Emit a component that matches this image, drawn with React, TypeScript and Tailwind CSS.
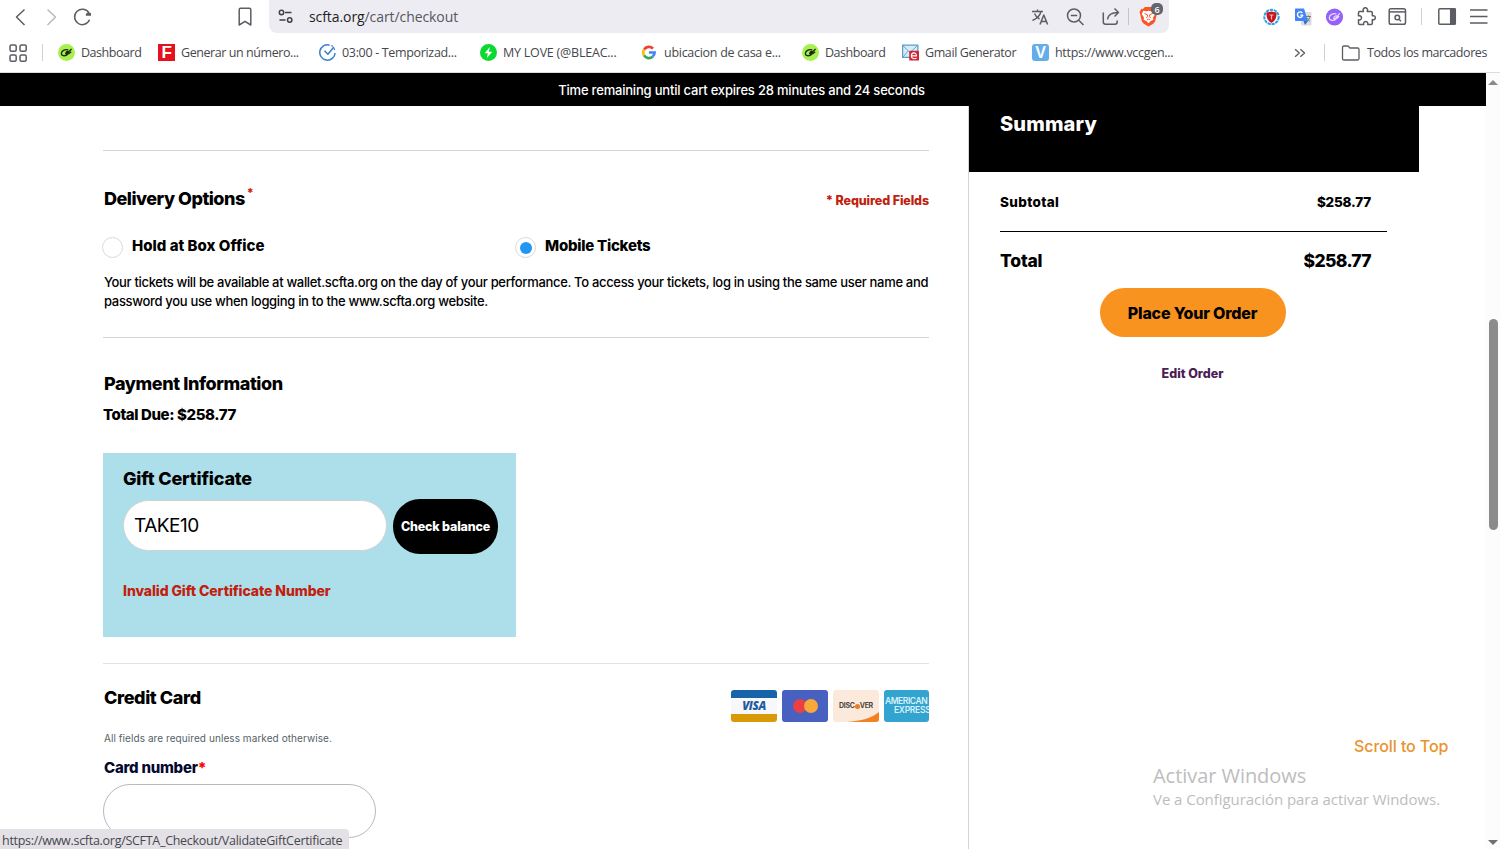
import type {ReactNode} from 'react';

const Svg = ({children, size = 20}: {children: ReactNode; size?: number}) => (
  <svg
    width={size}
    height={size}
    viewBox="0 0 20 20"
    fill="none"
    stroke="#5b5d63"
    strokeWidth="1.5"
    strokeLinejoin="round"
    className="block shrink-0"
  >
    {children}
  </svg>
);

const LeafIcon = () => (
  <Svg size={17}>
    <circle cx="10" cy="10" r="10" fill="#a6f04f" stroke="none" />
    <path
      d="M12 7C8 5.500 3.800 8.500 4 11.500C4.300 14.500 9 14.500 11.500 12C13.500 10 12.500 8 10.500 9C9 10 8.500 12 10 11.500L16 6M12.500 11.500L15.500 9"
      stroke="#1d2b12"
      strokeWidth="1.600"
    />
  </Svg>
);

const FIcon = () => (
  <span className="flex size-[17px] shrink-0 items-center justify-center bg-[#e3121c] font-['Liberation_Sans'] text-[17px] leading-none font-bold text-white">
    F
  </span>
);

const TimerIcon = () => (
  <Svg size={17}>
    <path d="M12.500 1.400A9 9 0 1 0 18.900 10.500" stroke="#3b7fd0" strokeWidth="1.800" />
    <path d="M6.500 8l4 4L17.500 3.500" stroke="#3b7fd0" strokeWidth="1.800" />
    <path d="M14.500 1.800l1.800 1M17.500 5l1 2" stroke="#3b7fd0" />
  </Svg>
);

const BoltIcon = () => (
  <Svg size={17}>
    <circle cx="10" cy="10" r="10" fill="#0bd92f" stroke="none" />
    <path d="M11.500 3.500L5.500 11h3.700l-1 5.500L14.500 9h-4z" fill="#fff" stroke="none" />
  </Svg>
);

const GoogleIcon = () => (
  <Svg size={17}>
    <g strokeWidth="3.200" strokeLinejoin="miter">
      <path d="M3.600 6.600A6.600 6.600 0 0 1 14.100 5.400" stroke="#ea4335" />
      <path d="M3.600 13.400A6.700 6.700 0 0 1 3.600 6.600" stroke="#fbbc05" />
      <path d="M13.600 15A6.600 6.600 0 0 1 3.600 13.400" stroke="#34a853" />
      <path d="M9.300 10h6.700A6.600 6.600 0 0 1 13.600 15" stroke="#4285f4" />
    </g>
  </Svg>
);

const MailIcon = () => (
  <Svg size={17}>
    <rect x="0.700" y="1.200" width="18" height="14.500" fill="#d6ecf9" stroke="#5d9dcb" />
    <path d="M1 2l8.500 8L18 2M1 15.500L7 8.500" stroke="#5d9dcb" strokeWidth="1.100" />
    <rect x="8.500" y="8" width="11.500" height="11.500" rx="1" fill="#cf2732" stroke="none" />
    <path d="M11.500 14h5.500c0-5-6-4.500-6 0 0 3.500 4 4 6 2.500" stroke="#fff" strokeWidth="1.300" />
  </Svg>
);

const VIcon = () => (
  <span className="flex size-[17px] shrink-0 items-center justify-center rounded-[3px] bg-[#62aeea] font-['Liberation_Sans'] text-[16px] leading-none font-bold text-white">
    V
  </span>
);

const bookmarks = [
  {icon: <LeafIcon />, label: 'Dashboard', width: 'w-[100px] tracking-[-0.450px]'},
  {icon: <FIcon />, label: 'Generar un número...', width: 'w-[161px] tracking-[-0.430px]'},
  {icon: <TimerIcon />, label: '03:00 - Temporizad...', width: 'w-[161px] tracking-[-0.330px]'},
  {icon: <BoltIcon />, label: 'MY LOVE (@BLEAC...', width: 'w-[161px] tracking-[-0.220px]'},
  {icon: <GoogleIcon />, label: 'ubicacion de casa e...', width: 'w-[161px] tracking-[-0.280px]'},
  {icon: <LeafIcon />, label: 'Dashboard', width: 'w-[100px] tracking-[-0.450px]'},
  {icon: <MailIcon />, label: 'Gmail Generator', width: 'w-[130px] tracking-[-0.400px]'},
  {icon: <VIcon />, label: 'https://www.vccgen...', width: 'w-[161px] tracking-[-0.300px]'},
];

const Toolbar = () => (
  <div className="flex h-[33px] items-center">
    <div className="ml-[10px] flex items-center gap-[11px]">
      <Svg>
        <path d="M14.500 2.500L6.500 10l8 8" />
      </Svg>
      <Svg>
        <path d="M6.500 2.500l8 7.500-8 8" stroke="#b9b9bd" />
      </Svg>
      <Svg>
        <path d="M17.500 12.800A7.700 7.700 0 1 1 17 6" strokeWidth="1.500" />
        <path d="M19 3.500v5.200h-5.200c-.3-2.500 2.200-4 5.200-2.500z" fill="#5b5d63" stroke="none" />
      </Svg>
    </div>
    <div className="ml-[143px]">
      <Svg>
        <path d="M4.200 2.800c0-1 .6-1.500 1.400-1.500h8.800c.8 0 1.400.5 1.400 1.500V18L10 14.300 4.200 18z" />
      </Svg>
    </div>
    <div className="ml-[14px] flex h-[33px] w-[900px] items-center rounded-b-lg bg-[#edecf2] pl-[7px]">
      <Svg>
        <g stroke="#3f4046">
          <circle cx="5.500" cy="5.500" r="2.200" />
          <path d="M9 5.500h6.500M3.500 13h6" />
          <circle cx="13.700" cy="13" r="2.200" />
        </g>
      </Svg>
      <span className="ml-[13px] text-[14px] tracking-[-0.080px] text-[#55575e]">
        <span className="text-[#1e1f24]">scfta.org</span>/cart/checkout
      </span>
      <div className="mr-[10px] ml-auto flex items-center">
        <Svg>
          <path d="M2 4.500h11M7.500 2.500v2M11 4.500C10 8.500 6 12 2.500 13.500M4.500 6.500c1 2.500 3 4.500 5 5.500" strokeWidth="1.400" />
          <path d="M10 17.500l3.800-9.500 3.800 9.500M11.300 14.500h5" strokeWidth="1.500" />
        </Svg>
        <div className="ml-[15px]">
          <Svg>
            <circle cx="9" cy="8.500" r="6.500" />
            <path d="M14 13.500l4.500 4.500M5.800 8.500h6.400" />
          </Svg>
        </div>
        <div className="ml-[16px]">
          <Svg>
            <path d="M2.300 5.500V15c0 1.500.7 2.200 2.200 2.200h9.500c1.500 0 2.200-.7 2.200-2.200v-1.500" />
            <path d="M6.500 12.500C7 8 9.500 5.500 17 5.500M13.500 1.500l4 4-4 4" />
          </Svg>
        </div>
        <div className="ml-[7px] h-[17px] w-px bg-[#c4c3cb]" />
        <div className="relative ml-[9px]">
          <Svg size={21}>
            <path
              d="M6.500 1h7l1.800 1.800 1.500-.2 1.700 3-.6 2.500-1.600 6.700-1.800 2.200L10 19.600 5.500 17l-1.800-2.200-1.600-6.700L1.500 5.600l1.700-3 1.500.2z"
              fill="#fb542b"
              stroke="none"
            />
            <path
              d="M5 4.500l3 .5 2-.5 2 .5 3-.5 1.500 3-2.200 3.500.3 2-2.800 1.500L10 16.500 8.200 14.500l-2.800-1.500.3-2L3.500 7.500z"
              fill="#fff"
              stroke="none"
            />
            <path d="M6.200 7.200l2.800 1.100M13.800 7.200L11 8.300M9 8.300v2l-1.200 1.200M11 8.300v2l1.200 1.200M8.500 13.300L10 12.500l1.500.8" stroke="#fb542b" strokeWidth="0.900" />
          </Svg>
          <span className="absolute -top-[3px] left-[13px] flex size-[12px] items-center justify-center rounded-[5px] bg-[#63646d] text-[9px] leading-none font-semibold text-white">
            6
          </span>
        </div>
      </div>
    </div>
    <div className="ml-[92px] flex items-center gap-[11.500px]">
      <Svg>
        <circle cx="10.500" cy="10" r="7.200" stroke="#2e9de4" strokeWidth="2" strokeDasharray="3.200 0.800" />
        <path d="M5.500 5.500c3 0 3.500-1 5-1s2 1 5 1c.3 5-1 8.500-5 10.500-4-2-5.300-5.500-5-10.500z" fill="#c4161f" stroke="none" />
        <path d="M8.500 8h4M10.500 8v4.500" stroke="#f3b5b8" strokeWidth="1.200" />
      </Svg>
      <Svg>
        <rect x="8" y="5" width="10.500" height="13.500" rx="1" fill="#dcdde0" stroke="none" />
        <path d="M3 1.500h8l4 12.500H3c-.6 0-1-.4-1-1V2.500c0-.6.400-1 1-1z" fill="#4285f4" stroke="none" />
        <path d="M10.500 14h4.500l-3 4z" fill="#3367d6" stroke="none" />
        <path d="M9.300 6a2.700 2.700 0 1 0 .5 2.200H7.300" stroke="#fff" strokeWidth="1.300" />
        <path d="M13 9.500h5M15.500 8.500v1M17 9.500c-.5 2.500-1.500 3.500-2.500 4.500M14.500 11c.8 2 1.500 3 2.500 3.500" stroke="#70757a" strokeWidth="0.900" />
      </Svg>
      <Svg>
        <circle cx="10.500" cy="10" r="8.600" fill="#9461fa" stroke="none" />
        <path
          d="M12.500 7C9 5.800 5.300 8 5.300 10.800c0 3 4.500 3.300 6.700 1.200 2-2 1-3.500-.5-3-1.500.6-2.500 2.700-1.300 2.800C12 11.800 14 8.500 15.800 6M12.800 11.500l2.400-2.300"
          stroke="#e6dbff"
          strokeWidth="1.200"
        />
      </Svg>
      <Svg>
        <path d="M3.500 4.500h4c-1-2 .2-3.700 1.800-3.700s2.900 1.700 1.900 3.700H15c.8 0 1.300.5 1.300 1.300v3c2-.6 3 .5 3 1.900s-1 2.500-3 1.900v3.700c0 .8-.5 1.300-1.300 1.300h-3.300c.5-2-.5-3-2-3s-2.500 1-2 3H3.800c-.8 0-1.300-.5-1.300-1.300v-3.500c2 .5 3-.6 3-2s-1-2.500-3-2V5.800C2.500 5 2.800 4.500 3.500 4.500z" />
      </Svg>
      <Svg>
        <rect x="2.200" y="1.700" width="16.300" height="15.500" rx="1.800" />
        <path d="M2.200 4.900h16.300" />
        <circle cx="10.300" cy="10.500" r="2.300" />
        <path d="M12 12.200l2 2" />
      </Svg>
    </div>
    <div className="ml-[14px] h-[17px] w-px bg-[#d0d0d4]" />
    <div className="ml-[15px] flex items-center gap-[12px]">
      <Svg>
        <rect x="1.800" y="1.700" width="16.500" height="15.500" rx="1" />
        <path d="M13.700 2h4.300v15h-4.300z" fill="#5b5d63" />
      </Svg>
      <Svg>
        <path d="M1 3h17.500M1 9.500h17.500M1 16h17.500" />
      </Svg>
    </div>
  </div>
);

const BookmarksBar = () => (
  <div className="flex h-[40px] items-center border-b border-[#dcdcdf] text-[12.500px] text-[#46474d]">
    <div className="ml-[8px]">
      <Svg>
        <rect x="2" y="2" width="6.200" height="6.200" rx="1.500" />
        <rect x="12" y="2" width="6.200" height="6.200" rx="1.500" />
        <rect x="2" y="12" width="6.200" height="6.200" rx="1.500" />
        <rect x="12" y="12" width="6.200" height="6.200" rx="1.500" />
      </Svg>
    </div>
    <div className="ml-[14px] h-[17px] w-px bg-[#d0d0d4]" />
    <div className="ml-[15px] flex">
      {bookmarks.map(({icon, label, width}, i) => (
        <div key={i} className={`flex items-center gap-[6px] whitespace-nowrap ${width}`}>
          {icon}
          <span className="pt-[2px]">{label}</span>
        </div>
      ))}
    </div>
    <div className="ml-auto flex items-center">
      <Svg size={14}>
        <path d="M3 4.500l6 5.500-6 5.500M10.500 4.500l6 5.500-6 5.500" strokeWidth="1.900" />
      </Svg>
      <div className="ml-[17px] h-[17px] w-px bg-[#d0d0d4]" />
      <div className="ml-[16px]">
        <Svg>
          <path d="M1.500 4.500c0-1 .5-1.500 1.500-1.500h4l2 2h7.500c1 0 1.500.5 1.500 1.500v9c0 1-.5 1.500-1.500 1.500H3c-1 0-1.500-.5-1.500-1.500z" strokeWidth="1.300" />
        </Svg>
      </div>
      <span className="mr-[13px] ml-[6px] pt-[2px] tracking-[-0.420px] whitespace-nowrap">Todos los marcadores</span>
    </div>
  </div>
);

const Radio = ({label, checked}: {label: string; checked?: boolean}) => (
  <div className="flex w-[413px] items-center">
    <span className="-ml-px flex size-[21px] items-center justify-center rounded-full border border-[#d9d9d9]">
      {checked && <span className="size-[12px] rounded-full bg-[#2196f3]" />}
    </span>
    <span className={`-mt-[3px] ml-[9px] text-[15px] font-extrabold ${checked ? 'tracking-[-0.250px]' : 'tracking-[0.020px]'}`}>
      {label}
    </span>
  </div>
);

const PaymentCards = () => (
  <div className="flex gap-[5px]">
    <div className="flex h-[32px] w-[46px] items-center justify-center rounded-[3px] border-t-[8px] border-b-[8px] border-t-[#1763a9] border-b-[#d99a08] bg-[#f8f8fa] font-['Open_Sans'] text-[11.500px] font-extrabold tracking-[-0.400px] text-[#1f5ba0] italic">
      VISA
    </div>
    <div className="flex h-[32px] w-[46px] items-center justify-center rounded-[3px] bg-[#4860bf]">
      <span className="size-[14px] rounded-full bg-[#ea3f43]" />
      <span className="-ml-[3px] size-[14px] rounded-full bg-[#f9a83b]" />
    </div>
    <div className="relative flex h-[32px] w-[46px] items-center justify-center overflow-hidden rounded-[3px] bg-[#fbeadb]">
      <svg width="46" height="32" className="absolute inset-0">
        <path d="M14 32C28 31 39 28 46 22v10z" fill="#f58020" />
      </svg>
      <span className="relative flex items-center text-[7px] font-bold tracking-[-0.300px] text-[#4d4744]">
        DISC
        <span className="size-[5px] rounded-full bg-[#f37a20]" />
        VER
      </span>
    </div>
    <div className="h-[32px] w-[45px] overflow-hidden rounded-[3px] bg-[#32a4cf] pt-[7px] pl-px text-[8.500px] leading-[9px] font-semibold tracking-[-0.450px] whitespace-nowrap text-[#d8f1fa]">
      <div>AMERICAN</div>
      <div className="pl-[9px] tracking-[-0.300px]">EXPRESS</div>
    </div>
  </div>
);

const Checkout = () => (
  <main className="w-[968px] shrink-0 pt-[44px] pr-[39px] pl-[103px]">
    <section className="h-[187px] border-t border-[#d4d4d4] pt-[35px]">
      <div className="flex items-center justify-between">
        <h2 className="flex pl-px text-[18px] leading-[26px] font-extrabold tracking-[-0.500px]">
          Delivery Options
          <span className="-mt-[3px] ml-[2px] text-[12px] leading-[20px] text-[#c91d0d]">*</span>
        </h2>
        <span className="mt-[5px] text-[12.500px] font-extrabold tracking-[-0.120px] text-[#c2200d]">* Required Fields</span>
      </div>
      <div className="mt-[25px] flex h-[21px]">
        <Radio label="Hold at Box Office" />
        <Radio label="Mobile Tickets" checked />
      </div>
      <p className="mt-[15px] pl-px text-[13px] leading-[19px] font-medium tracking-[-0.325px] whitespace-nowrap">
        Your tickets will be available at wallet.scfta.org on the day of your performance. To access your tickets, log in using the same user name and
        <br />
        password you use when logging in to the www.scfta.org website.
      </p>
    </section>
    <section className="h-[326px] border-t border-[#d4d4d4] pt-[33px]">
      <h2 className="pl-px text-[18px] leading-[26px] font-extrabold tracking-[-0.420px]">Payment Information</h2>
      <p className="mt-[8px] text-[15px] leading-[20px] font-extrabold tracking-[-0.400px]">Total Due: $258.77</p>
      <div className="mt-[28px] h-[184px] w-[413px] bg-[#addfeb] px-[20px] pt-[13px]">
        <h3 className="text-[18px] leading-[26px] font-extrabold tracking-[-0.180px]">Gift Certificate</h3>
        <div className="mt-[7px] flex gap-[6px]">
          <div className="mt-px flex h-[51px] w-[264px] shrink-0 items-center rounded-full border border-[#cdd3d5] bg-white pt-[2px] pl-[10px] text-[19px] tracking-[-0.500px]">
            TAKE10
          </div>
          <button className="h-[55px] w-[105px] shrink-0 rounded-[27px] bg-black pt-px text-[12.500px] font-extrabold tracking-[-0.180px] whitespace-nowrap text-white">
            Check balance
          </button>
        </div>
        <p className="mt-[27px] text-[14px] leading-[20px] font-extrabold tracking-[-0.100px] text-[#c2200d]">
          Invalid Gift Certificate Number
        </p>
      </div>
    </section>
    <section className="border-t border-[#e2e2e2] pt-[21px]">
      <div className="flex h-[38px] justify-between">
        <h2 className="pl-px text-[18px] leading-[26px] font-extrabold tracking-[-0.400px]">Credit Card</h2>
        <div className="mt-[5px]">
          <PaymentCards />
        </div>
      </div>
      <p className="mt-[8px] pl-px text-[10px] leading-[14px] tracking-[0.070px] text-[#555f66]">
        All fields are required unless marked otherwise.
      </p>
      <p className="mt-[13px] pl-px text-[15px] leading-[20px] font-extrabold tracking-[-0.260px] text-[#05092f]">
        Card number<span className="text-[#f00]">*</span>
      </p>
      <div className="mt-[6px] h-[54px] w-[273px] rounded-full border border-[#b4babe]" />
    </section>
  </main>
);

const Summary = () => (
  <aside className="w-[451px] shrink-0 border-l border-[#d4d4d4]">
    <h2 className="h-[66px] bg-black pt-[5px] pl-[31px] text-[20px] leading-[26px] font-extrabold tracking-[0.150px] text-white">
      Summary
    </h2>
    <div className="px-[31px]">
      <div className="flex h-[60px] w-[387px] items-center justify-between border-b border-black pt-[2px] pr-[16px] text-[13.500px] font-extrabold">
        <span className="tracking-[0.350px]">Subtotal</span>
        <span className="tracking-[-0.200px]">$258.77</span>
      </div>
      <div className="flex h-[56px] w-[387px] items-center justify-between pt-[2px] pr-[16px] text-[17.500px] font-extrabold">
        <span className="tracking-[-0.200px]">Total</span>
        <span className="tracking-[-0.650px]">$258.77</span>
      </div>
      <div className="flex w-[385px] flex-col items-center">
        <button className="h-[49px] w-[186px] rounded-full bg-[#f7931e] pt-px text-[16px] font-extrabold tracking-[-0.200px]">
          Place Your Order
        </button>
        <a className="mt-[28px] text-[12.500px] leading-[18px] font-extrabold text-[#4a1d55]">Edit Order</a>
      </div>
    </div>
  </aside>
);

const App = () => {
  return (
    <div className="relative flex h-[849px] w-[1500px] flex-col overflow-hidden bg-white font-['Open_Sans',sans-serif]">
      <Toolbar />
      <BookmarksBar />
      <div className="flex min-h-0 flex-1">
        <div className="flex w-[1486px] flex-col overflow-hidden font-['Inter',sans-serif] text-black">
          <div className="flex h-[33px] shrink-0 items-center justify-center bg-black pt-[2px] pr-[3px] text-[13px] font-medium tracking-[-0.200px] text-white">
            Time remaining until cart expires 28 minutes and 24 seconds
          </div>
          <div className="flex min-h-0 flex-1">
            <Checkout />
            <Summary />
          </div>
        </div>
        <div className="flex w-[14px] flex-col items-center bg-[#fcfcfc] pt-[7px] pb-[4px]">
          <svg width="10" height="5">
            <path d="M0 5l5-5 5 5z" fill="#8b8b8b" />
          </svg>
          <div className="mt-[234px] h-[211px] w-[9px] rounded-full bg-[#8b8b8b]" />
          <svg width="10" height="5" className="mt-auto">
            <path d="M0 0l5 5 5-5z" fill="#707070" />
          </svg>
        </div>
      </div>

      <a className="absolute top-[735px] left-[1354px] font-['Inter'] text-[16px] leading-[22px] font-medium tracking-[-0.080px] whitespace-nowrap text-[#e8932f]">
        Scroll to Top
      </a>
      <div className="absolute top-[762px] left-[1153px] whitespace-nowrap text-[#bdbdbd]">
        <div className="text-[20px] leading-[27px] tracking-[-0.050px]">Activar Windows</div>
        <div className="text-[15px] leading-[21px] tracking-[-0.050px]">Ve a Configuración para activar Windows.</div>
      </div>
      <div className="absolute bottom-0 left-0 flex h-[20px] w-[349px] items-center rounded-tr-[4px] bg-[#e3e1e6] pt-[5px] pl-[2px] text-[12.500px] tracking-[-0.290px] whitespace-nowrap text-[#46474d]">
        https://www.scfta.org/SCFTA_Checkout/ValidateGiftCertificate
      </div>
    </div>
  );
};

export default App;
